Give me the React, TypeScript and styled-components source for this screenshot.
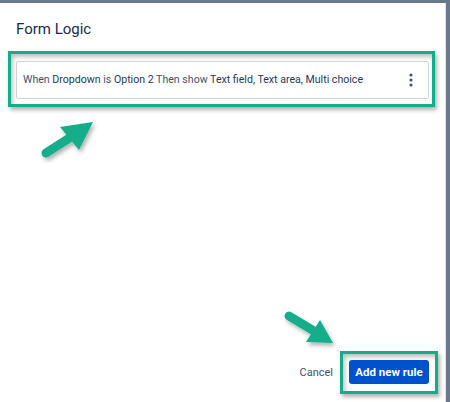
import React from "react";
import styled, { createGlobalStyle } from "styled-components";

const GlobalStyle = createGlobalStyle`
  html, body { margin: 0; padding: 0; }
  body {
    background: #6b778c;
    font-family: Roboto, "Liberation Sans", Arial, sans-serif;
    width: 450px;
    height: 402px;
    overflow: hidden;
  }
`;

const Page = styled.div`
  position: relative;
  width: 450px;
  height: 402px;
  box-sizing: border-box;
  padding: 3px 4px 0 0;
  display: flex;
`;

const Modal = styled.div`
  flex: 1;
  background: #ffffff;
  display: flex;
  flex-direction: column;
  box-sizing: border-box;
  padding: 16px 0 8px 0;
  border-right: 1px solid #e4e6ea;
`;

const Title = styled.h2`
  margin: 0 0 12px 16px;
  font-size: 15px;
  line-height: 20px;
  font-weight: 400;
  color: #172b4d;
`;

const Highlight = styled.div<{ $pad: string }>`
  border: 3px solid #14ad8a;
  padding: ${(p) => p.$pad};
  box-shadow: 2px 3px 4px rgba(0, 0, 0, 0.3), inset 2px 3px 4px rgba(0, 0, 0, 0.25);
`;

const RuleHighlight = styled(Highlight)`
  margin: 0 10px 0 8px;
`;

const RuleCard = styled.div`
  height: 38px;
  box-sizing: border-box;
  border: 1px solid #cfd2d6;
  border-radius: 2px;
  background: #fff;
  display: flex;
  align-items: center;
  padding: 0 11px 0 6px;
`;

const RuleText = styled.div`
  flex: 1;
  font-size: 10.6px;
  line-height: 14px;
  white-space: nowrap;
`;

const Word = styled.span<{ $kind: "key" | "value" }>`
  color: ${(p) => (p.$kind === "key" ? "#42526e" : "#253858")};
`;

const MenuButton = styled.button`
  border: none;
  background: transparent;
  padding: 0;
  width: 12px;
  height: 18px;
  display: flex;
  align-items: center;
  justify-content: center;
  cursor: pointer;
`;

const Spacer = styled.div`
  flex: 1;
`;

const Footer = styled.div`
  display: flex;
  justify-content: flex-end;
  align-items: center;
  gap: 7px;
  padding-right: 7px;
`;

const CancelButton = styled.button`
  border: none;
  background: transparent;
  padding: 0;
  font-family: inherit;
  font-size: 11px;
  color: #42526e;
  cursor: pointer;
`;

const ButtonHighlight = styled(Highlight)``;

const PrimaryButton = styled.button`
  width: 80px;
  height: 24px;
  border: none;
  border-radius: 3px;
  background: #0052cc;
  color: #ffffff;
  font-family: inherit;
  font-weight: 700;
  font-size: 11.5px;
  display: block;
  cursor: pointer;
`;

const Annotations = styled.svg`
  position: absolute;
  left: 0;
  top: 0;
  pointer-events: none;
`;

const GREEN = "#14ad8a";

export default function App() {
  return (
    <>
      <GlobalStyle />
      <Page>
        <Modal>
          <Title>Form Logic</Title>
          <RuleHighlight $pad="7px 3px 5px 5px">
            <RuleCard>
              <RuleText>
                <Word $kind="key">When </Word>
                <Word $kind="value">Dropdown </Word>
                <Word $kind="key">is </Word>
                <Word $kind="value">Option 2 </Word>
                <Word $kind="key">Then show </Word>
                <Word $kind="value">Text field, Text area, Multi choice</Word>
              </RuleText>
              <MenuButton aria-label="More">
                <svg width="4" height="14" viewBox="0 0 4 14">
                  <circle cx="2" cy="2" r="1.6" fill="#42526e" />
                  <circle cx="2" cy="7" r="1.6" fill="#42526e" />
                  <circle cx="2" cy="12" r="1.6" fill="#42526e" />
                </svg>
              </MenuButton>
            </RuleCard>
          </RuleHighlight>
          <Spacer />
          <Footer>
            <CancelButton>Cancel</CancelButton>
            <ButtonHighlight $pad="6px 6px 7px 6px">
              <PrimaryButton>Add new rule</PrimaryButton>
            </ButtonHighlight>
          </Footer>
        </Modal>
        <Annotations width="450" height="402" viewBox="0 0 450 402">
          <defs>
            <filter id="sh" x="-30%" y="-30%" width="160%" height="160%">
              <feDropShadow dx="2" dy="3" stdDeviation="2" floodColor="#000" floodOpacity="0.3" />
            </filter>
          </defs>
          <g filter="url(#sh)">
            <line x1="46" y1="153" x2="71" y2="137" stroke={GREEN} strokeWidth="9" strokeLinecap="round" />
            <polygon points="93,122 60,127 79,150" fill={GREEN} />
          </g>
          <g filter="url(#sh)">
            <line x1="289" y1="316" x2="314" y2="331" stroke={GREEN} strokeWidth="9" strokeLinecap="round" />
            <polygon points="333,343 306,342 320,320" fill={GREEN} />
          </g>
        </Annotations>
      </Page>
    </>
  );
}
